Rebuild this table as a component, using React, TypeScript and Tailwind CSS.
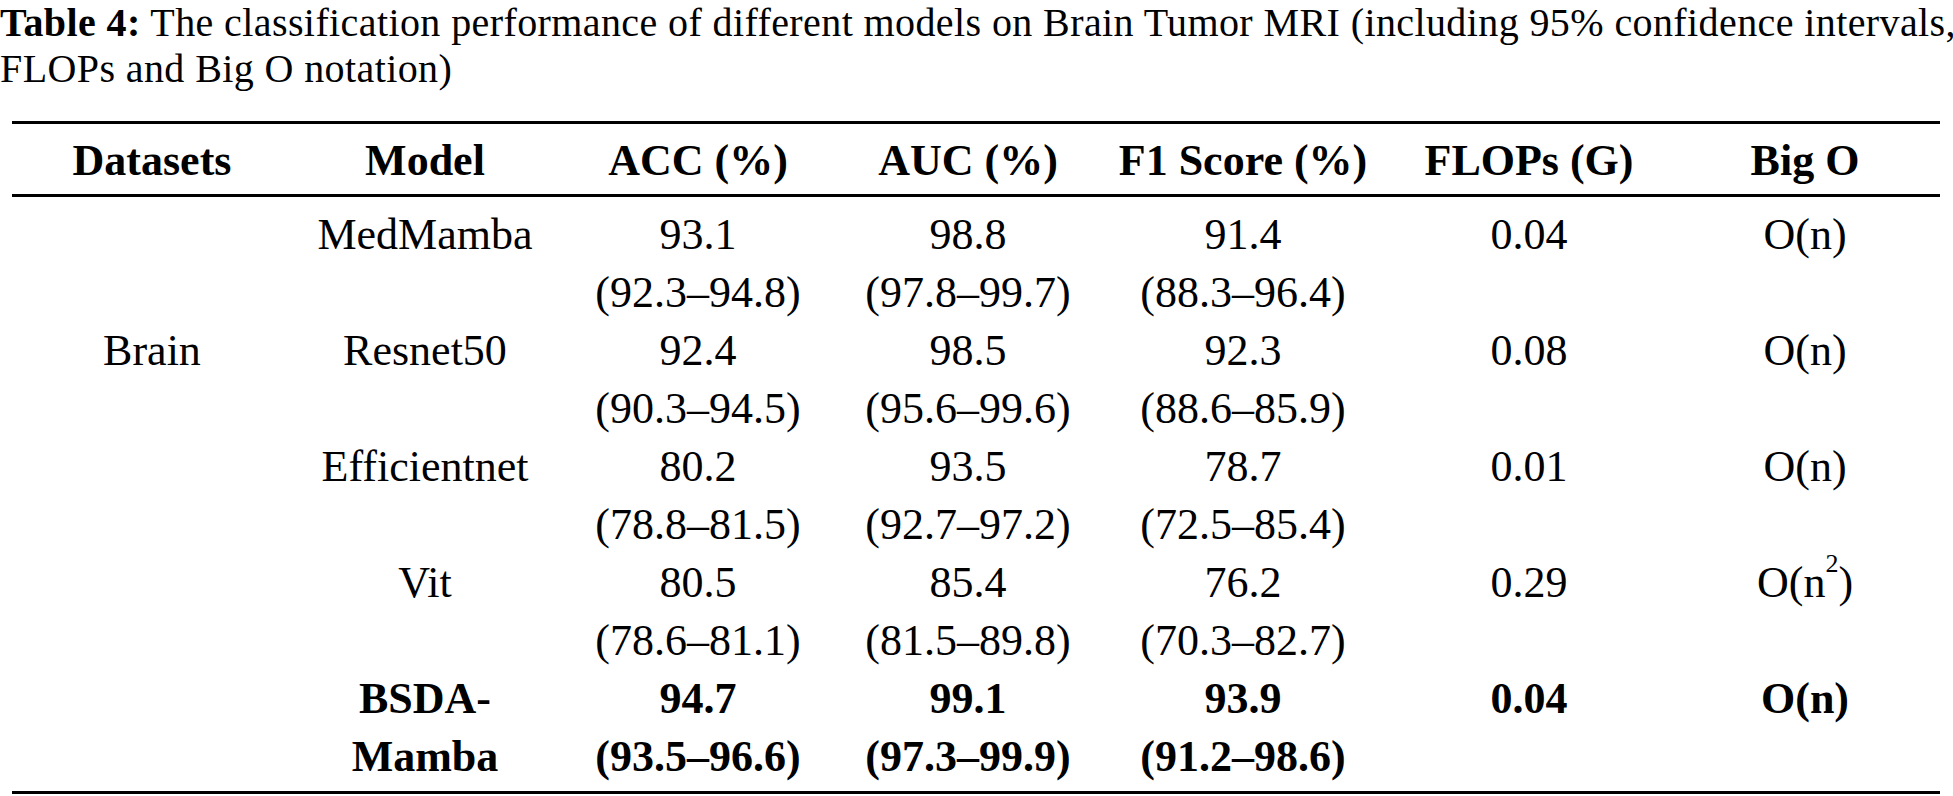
const rows = [
  { model: ['MedMamba'], acc: ['93.1', '(92.3–94.8)'], auc: ['98.8', '(97.8–99.7)'], f1: ['91.4', '(88.3–96.4)'], flops: '0.04', big: 'n' },
  { model: ['Resnet50'], acc: ['92.4', '(90.3–94.5)'], auc: ['98.5', '(95.6–99.6)'], f1: ['92.3', '(88.6–85.9)'], flops: '0.08', big: 'n', dataset: 'Brain' },
  { model: ['Efficientnet'], acc: ['80.2', '(78.8–81.5)'], auc: ['93.5', '(92.7–97.2)'], f1: ['78.7', '(72.5–85.4)'], flops: '0.01', big: 'n' },
  { model: ['Vit'], acc: ['80.5', '(78.6–81.1)'], auc: ['85.4', '(81.5–89.8)'], f1: ['76.2', '(70.3–82.7)'], flops: '0.29', big: 'n2' },
  { model: ['BSDA-', 'Mamba'], acc: ['94.7', '(93.5–96.6)'], auc: ['99.1', '(97.3–99.9)'], f1: ['93.9', '(91.2–98.6)'], flops: '0.04', big: 'n', bold: true },
];

const headers = ['Datasets', 'Model', 'ACC (%)', 'AUC (%)', 'F1 Score (%)', 'FLOPs (G)', 'Big O'];

const grid = 'grid grid-cols-[280px_266px_280px_260px_290px_282px_270px]';

function Lines({ items }: { items: string[] }) {
  return (
    <div className="flex flex-col items-center">
      {items.map((t, i) => (
        <span key={i} className="whitespace-nowrap">{t}</span>
      ))}
    </div>
  );
}

export default function App() {
  return (
    <div className="min-h-screen bg-white text-black" style={{ fontFamily: '"Liberation Serif", "Times New Roman", serif' }}>
      {/* Caption */}
      <div className="text-[40px] leading-[46px] tracking-[0.4px] whitespace-nowrap">
        <div>
          <span className="font-bold">Table 4:</span> The classification performance of different models on Brain Tumor MRI (including 95% confidence intervals,
        </div>
        <div>FLOPs and Big O notation)</div>
      </div>

      {/* Table */}
      <div className="ml-[12px] mt-[29px] w-[1928px] text-[44px] leading-[58px]">
        <div className={`${grid} border-t-[3px] border-b-[3px] border-black pt-[8px] pb-[4px]`}>
          {headers.map((h) => (
            <div key={h} className="text-center font-bold whitespace-nowrap">{h}</div>
          ))}
        </div>
        <div className="border-b-[3px] border-black pt-[9px] pb-[5px]">
          {rows.map((r, i) => (
            <div key={i} className={`${grid} ${r.bold ? 'font-bold' : ''}`}>
              <div className="text-center">{r.dataset ?? ''}</div>
              <Lines items={r.model} />
              <Lines items={r.acc} />
              <Lines items={r.auc} />
              <Lines items={r.f1} />
              <div className="text-center">{r.flops}</div>
              <div className="text-center">
                {r.big === 'n2' ? (
                  <span>O(n<sup className="text-[26px] align-[12px] leading-none">2</sup>)</span>
                ) : (
                  'O(n)'
                )}
              </div>
            </div>
          ))}
        </div>
      </div>
    </div>
  );
}
